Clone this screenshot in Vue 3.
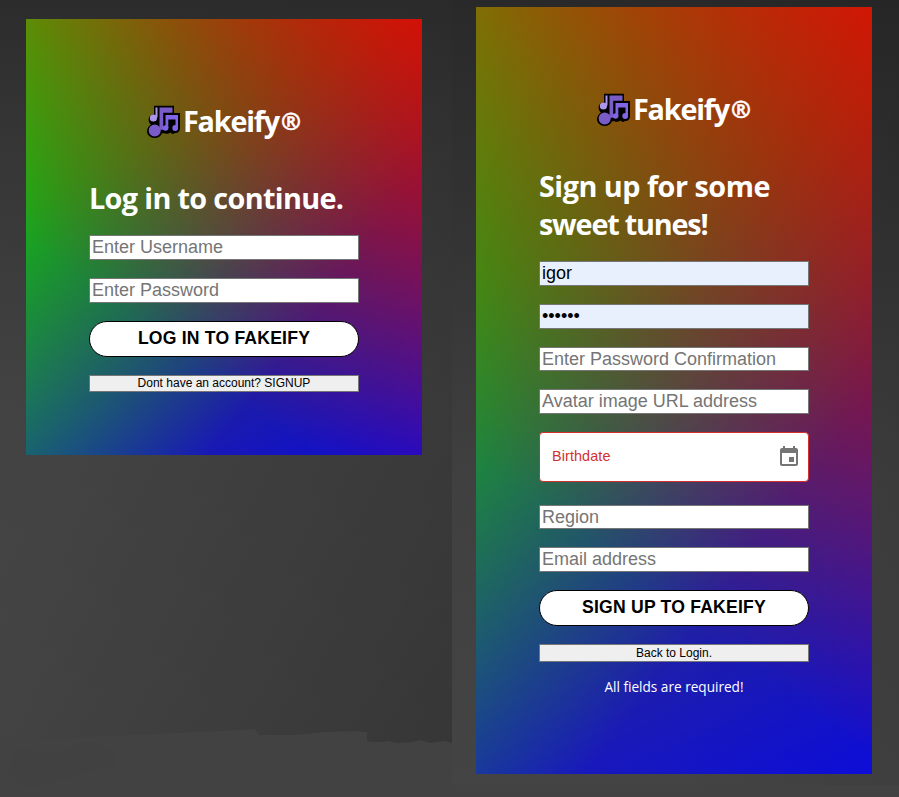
<script setup>
import { ref } from 'vue'

const username = ref('')
const password = ref('')
const signup = ref({
  username: 'igor',
  password: 'secret',
  confirmation: '',
  avatar: '',
  region: '',
  email: ''
})

const cards = ['login', 'signup']
</script>

<template>
  <main class="stage">
    <section v-for="card in cards" :key="card" class="pane" :class="card">
      <form class="card" @submit.prevent>
        <div class="brand">
          <svg class="notes" viewBox="0 0 34 34" aria-hidden="true">
            <path
              fill="#000"
              d="M7 .7H27V8H33V23.500c0 3-2.500 5-5 4.500-2 1.500-3 1-4.500-.5-2 1.500-4 1.500-6 .7H15c-1 3-4 4.800-7.500 4.800C3.500 33 0 30 0 26.500c0-3 1.500-5.500 4-7C1.500 18 1 14 2.500 11.500 3.500 10 5 9.300 7 9.400Z"
            />
            <path fill="#7a5cc8" d="M12.500 2.500h13v5.200h-9.300v17h-3.700z" />
            <circle fill="#7a5cc8" cx="7.700" cy="25.500" r="6" />
            <path fill="#ac97ed" d="M8.500 2.500h2v10h-2z" />
            <circle fill="#ac97ed" cx="6.400" cy="13" r="3.600" />
            <path fill="#8265e6" d="M18.500 10h12.500v13h-2.500v-8.500h-7.200v8.500h-2.800z" />
            <circle fill="#8265e6" cx="18.600" cy="23" r="2.800" />
            <circle fill="#8265e6" cx="28.200" cy="23" r="2.900" />
          </svg>
          <span class="name">Fakeify</span><span class="mark">®</span>
        </div>

        <template v-if="card === 'login'">
          <h1 class="title">Log in to continue.</h1>
          <input v-model="username" class="field" type="text" placeholder="Enter Username" />
          <input v-model="password" class="field" type="password" placeholder="Enter Password" />
          <button class="primary">LOG IN TO FAKEIFY</button>
          <button class="secondary" type="button">Dont have an account? SIGNUP</button>
        </template>

        <template v-else>
          <h1 class="title">Sign up for some<br /><span class="tight">sweet tunes!</span></h1>
          <input v-model="signup.username" class="field filled" type="text" />
          <input v-model="signup.password" class="field filled" type="password" />
          <input v-model="signup.confirmation" class="field short" type="password" placeholder="Enter Password Confirmation" />
          <input v-model="signup.avatar" class="field" type="text" placeholder="Avatar image URL address" />
          <div class="date">
            <span>Birthdate</span>
            <svg class="calendar" viewBox="0 0 24 24" aria-hidden="true">
              <path
                d="M17 12h-5v5h5v-5zM16 1v2H8V1H6v2H5c-1.11 0-1.99.9-1.99 2L3 19c0 1.1.89 2 2 2h14c1.1 0 2-.9 2-2V5c0-1.1-.9-2-2-2h-1V1h-2zm3 18H5V8h14v11z"
              />
            </svg>
          </div>
          <input v-model="signup.region" class="field short" type="text" placeholder="Region" />
          <input v-model="signup.email" class="field" type="text" placeholder="Email address" />
          <button class="primary">SIGN UP TO FAKEIFY</button>
          <button class="secondary tall" type="button">Back to Login.</button>
          <p class="hint">All fields are required!</p>
        </template>
      </form>
    </section>
    <svg class="backdrop" viewBox="0 0 899 797" aria-hidden="true">
      <path
        fill="#424242"
        d="M0 741 L60 738 L150 734 L220 731 L255 729 L259 735 L293 735 L325 732 L354 731 L367 732 L367 740 L370 742 L384 742 L387 741 L397 743 L412 742 L420 740 L430 743 L445 741 L452 743 L452 797 L0 797Z"
      />
      <path fill="#414141" d="M14 749 L55 753 L88 742 L112 751 L114 765 L60 780 L30 787 L8 775Z" />
      <path fill="#424242" d="M452 785 L899 785 L899 797 L452 797Z" />
      <path fill="#464244" d="M0 796h899v1H0z" />
    </svg>
  </main>
</template>

<style>
body {
  margin: 0;
}
</style>

<style scoped>
.stage {
  position: relative;
  display: flex;
  width: 899px;
  height: 797px;
  overflow: hidden;
  background: #424242;
  font-family: "Open Sans", "Noto Sans", sans-serif;
}
.backdrop {
  position: absolute;
  inset: 0;
  width: 899px;
  height: 797px;
  pointer-events: none;
}
.pane {
  box-sizing: border-box;
  height: 797px;
}
.pane.login {
  width: 452px;
  padding: 19px 0 0 26px;
  background: linear-gradient(125deg, rgba(0, 0, 0, 0) 38%, rgba(0, 0, 0, 0.24) 100%),
    linear-gradient(182deg, #2b2b2b 0%, #353535 18%, #424242 50%, #464646 90%);
}
.pane.signup {
  width: 447px;
  padding: 7px 0 0 24px;
  background: linear-gradient(90deg, rgba(0, 0, 0, 0) 50%, rgba(0, 0, 0, 0.08) 100%),
    linear-gradient(180deg, #292929 0%, #343434 30%, #404040 60%, #444 100%);
}
.card {
  box-sizing: border-box;
  display: flex;
  flex-direction: column;
  gap: 18px;
  width: 396px;
  padding: 86px 63px 0;
  background: linear-gradient(217deg, rgba(255, 0, 0, 0.8), rgba(255, 0, 0, 0) 70.71%),
    linear-gradient(127deg, rgba(0, 255, 0, 0.8), rgba(0, 255, 0, 0) 70.71%),
    linear-gradient(336deg, rgba(0, 0, 255, 0.8), rgba(0, 0, 255, 0) 70.71%);
}
.login .card {
  height: 436px;
}
.signup .card {
  height: 767px;
}
.brand {
  display: flex;
  justify-content: flex-start;
  height: 34px;
  margin-bottom: 22px;
  padding-left: 58px;
  color: #fff;
  font-weight: 700;
  font-size: 28.8px;
  line-height: 34px;
}
.notes {
  flex: none;
  width: 34px;
  height: 34px;
  margin-right: 2px;
}
.name {
  width: 98px;
  line-height: 32px;
  letter-spacing: -1.2px;
}
.mark {
  margin-left: 0;
  font-size: 24px;
  line-height: 31px;
  -webkit-text-stroke: 0.5px #fff;
}
.title {
  margin: 0;
  color: #fff;
  font-weight: 700;
  font-size: 28.8px;
  line-height: 38px;
  letter-spacing: -0.5px;
  white-space: nowrap;
}
.login .title {
  letter-spacing: -0.65px;
}
.tight {
  letter-spacing: -1.2px;
}
.field {
  box-sizing: border-box;
  width: 270px;
  height: 25px;
  margin: 0;
  padding: 0 2px 1px;
  border: 1px solid #767676;
  border-radius: 0;
  background: #fff;
  color: #000;
  font: 18px/21px "Liberation Sans", Arial, sans-serif;
  outline: none;
}
.field::placeholder {
  color: #757575;
  opacity: 1;
}
.field.short {
  height: 24px;
  padding-bottom: 0;
}
.field.filled {
  background: #e8f0fe;
}
.date {
  box-sizing: border-box;
  display: flex;
  align-items: center;
  justify-content: space-between;
  height: 50px;
  margin-bottom: 5px;
  padding: 0 7px 0 12px;
  border: 1px solid #d32f2f;
  border-radius: 4px;
  background: #fff;
  color: #d32f2f;
  font: 14.4px "Liberation Sans", Arial, sans-serif;
  letter-spacing: 0.1px;
}
.date span {
  padding-bottom: 2px;
}
.calendar {
  width: 24px;
  height: 24px;
  fill: #757575;
}
.primary {
  height: 36px;
  margin: 0;
  padding: 0 0 2px;
  border: 1px solid #000;
  border-radius: 18px;
  background: #fff;
  color: #000;
  font: 700 17.6px "Liberation Sans", Arial, sans-serif;
  letter-spacing: 0.2px;
}
.secondary {
  height: 17px;
  margin: 0;
  padding: 0;
  border: 1px solid #767676;
  border-radius: 0;
  background: #efefef;
  color: #000;
  font: 12px/15px "Liberation Sans", Arial, sans-serif;
}
.secondary.tall {
  height: 18px;
}
.hint {
  margin: -3px 0 0;
  color: #fff;
  font-size: 13.6px;
  line-height: 20px;
  text-align: center;
}
</style>
